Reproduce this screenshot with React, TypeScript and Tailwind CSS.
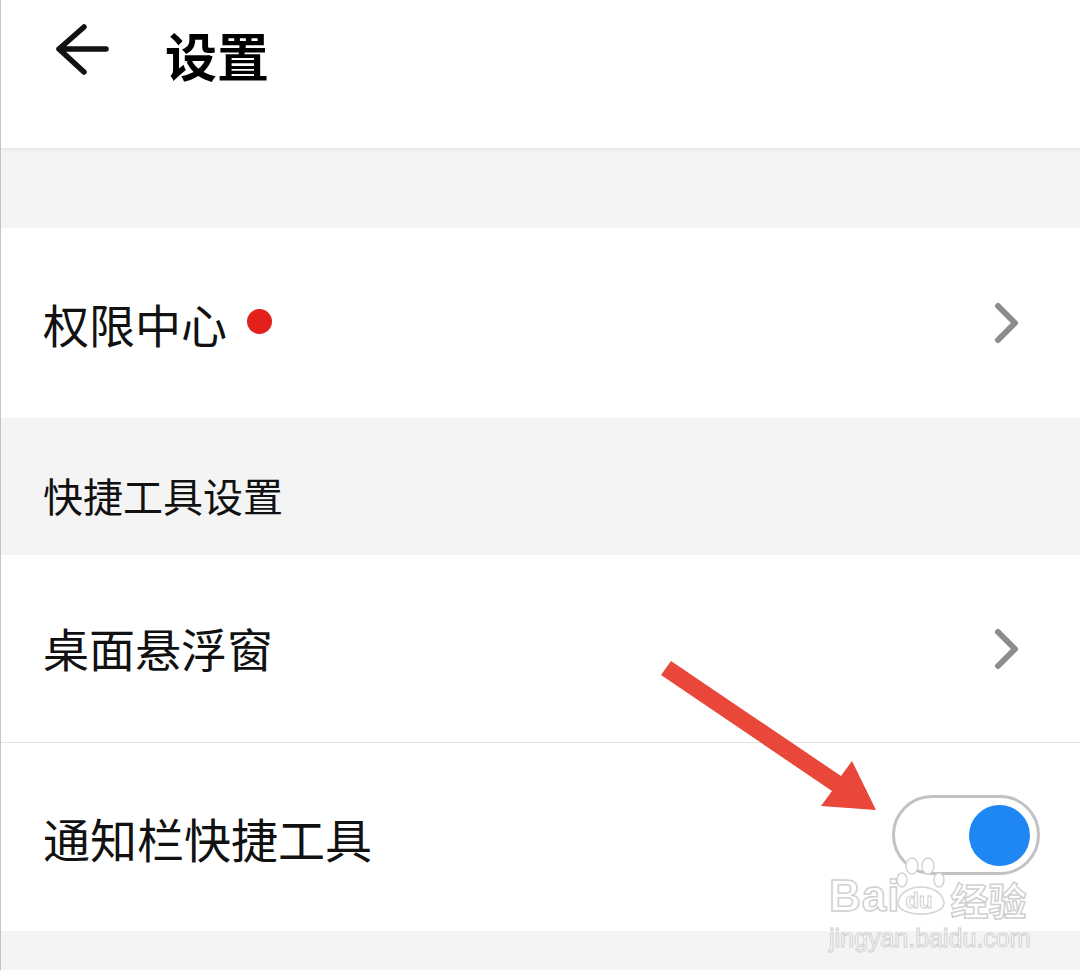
const cjk = "font-['Noto_Sans_CJK_SC','Noto_Sans',sans-serif]";

function Chevron() {
  return (
    <svg width="30" height="44" viewBox="0 0 30 44" className="mr-[60px]">
      <polyline points="8,5 25,22 8,39" fill="none" stroke="#8c8c8c" strokeWidth="6" strokeLinecap="round" strokeLinejoin="round" />
    </svg>
  );
}

function Row({ label, children, h }: { label: string; children?: React.ReactNode; h: string }) {
  return (
    <div className={`flex items-center justify-between bg-white pl-[42px] ${h}`}>
      <div className="flex items-center">
        <span className="text-[47px] text-[#111] leading-none">{label}</span>
      </div>
      {children}
    </div>
  );
}

export default function App() {
  return (
    <div className={`relative min-h-[970px] w-[1080px] overflow-hidden border-l border-[#c4c4c4] bg-[#f4f4f4] ${cjk}`}>
      {/* header */}
      <div className="relative z-10 flex h-[148px] items-center bg-white shadow-[0_2px_5px_rgba(0,0,0,0.06)]">
        <svg width="60" height="60" viewBox="0 0 60 60" className="ml-[52px] -mt-[40px]">
          <path d="M6 25 H53 M31 3 L6 25 L31 48" fill="none" stroke="#111" strokeWidth="5.5" strokeLinecap="round" strokeLinejoin="round" />
        </svg>
        <span className="ml-[52px] -mt-[38px] text-[52px] font-bold leading-none text-black">设置</span>
      </div>

      <div className="h-[80px]" />

      {/* 权限中心 */}
      <div className="flex h-[190px] items-center justify-between bg-white pl-[42px]">
        <div className="flex items-center">
          <span className="text-[46px] leading-none text-[#111]">权限中心</span>
          <span className="ml-[20px] -mt-[4px] h-[25px] w-[25px] rounded-full bg-[#e3201b]" />
        </div>
        <Chevron />
      </div>

      {/* section title */}
      <div className="flex h-[137px] items-center pl-[42px]">
        <span className="mt-[16px] text-[40px] leading-none text-[#111]">快捷工具设置</span>
      </div>

      <div className="flex h-[188px] items-center justify-between border-b border-[#e2e2e2] bg-white pl-[42px]">
        <span className="-mt-[4px] text-[46px] leading-none text-[#111]">桌面悬浮窗</span>
        <Chevron />
      </div>

      <Row label="通知栏快捷工具" h="h-[188px]">
        <div className="mr-[40px] -mt-[4px] flex h-[80px] w-[148px] items-center justify-end rounded-full border-[3px] border-[#c2c2c2] bg-white pr-[7px]">
          <div className="h-[61px] w-[61px] rounded-full bg-[#1e87f4]" />
        </div>
      </Row>

      {/* red annotation arrow */}
      <svg className="absolute left-0 top-0" width="1080" height="970" viewBox="0 0 1080 970">
        <polygon points="670,661 840,776 851,761 875,810 820,806 831,791 660,675" fill="#e8473a" />
      </svg>

      {/* baidu watermark */}
      <div className="absolute left-[828px] top-[856px] flex flex-col items-start">
        <div className="flex items-end">
          <span className="text-[44px] font-bold leading-none tracking-[1px] text-white [-webkit-text-stroke:1.5px_#d0d0d0] font-['Liberation_Sans',sans-serif]">Bai</span>
          <div className="relative -ml-[10px] h-[62px] w-[62px]">
            <svg className="absolute left-0 top-0" width="62" height="62" viewBox="0 0 62 62">
              <g fill="white" stroke="#d4d4d4" strokeWidth="1.5">
                <ellipse cx="22" cy="10" rx="6" ry="8" />
                <ellipse cx="38" cy="10" rx="6" ry="8" />
                <ellipse cx="12" cy="24" rx="5" ry="7" />
                <ellipse cx="49" cy="24" rx="5" ry="7" />
                <path d="M8 46 C 12 26, 50 26, 54 46 C 56 62, 6 62, 8 46 Z" />
              </g>
            </svg>
            <span className="absolute left-[15px] top-[34px] text-[22px] font-bold leading-none text-white [-webkit-text-stroke:1px_#d0d0d0] font-['Liberation_Sans',sans-serif]">du</span>
          </div>
          <span className="-ml-[2px] text-[38px] font-bold leading-none text-white [-webkit-text-stroke:1.5px_#d0d0d0]">经验</span>
        </div>
        <span className="mt-[8px] text-[25px] leading-none text-white [-webkit-text-stroke:1px_#d0d0d0] font-['Liberation_Sans',sans-serif]">jingyan.baidu.com</span>
      </div>
    </div>
  );
}
